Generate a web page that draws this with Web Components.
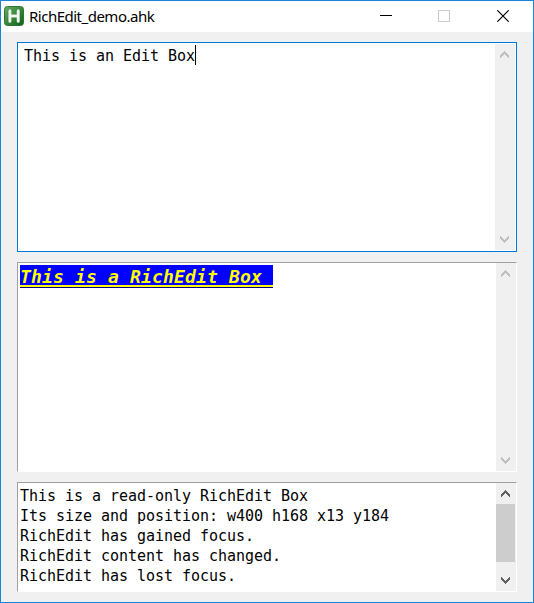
<!DOCTYPE html>
<html lang="en"><head><meta charset="utf-8"><title>RichEdit_demo.ahk</title>
<style>html,body{margin:0;height:100%;overflow:hidden}</style></head><body>
<demo-window>
  <title-bar slot="title">RichEdit_demo.ahk</title-bar>
  <text-box focused><edit-text>This is an Edit Box</edit-text></text-box>
  <text-box><rich-text>This is a RichEdit Box </rich-text></text-box>
  <text-box short active><log-text>This is a read-only RichEdit Box
Its size and position: w400 h168 x13 y184
RichEdit has gained focus.
RichEdit content has changed.
RichEdit has lost focus.</log-text></text-box>
</demo-window>
<script>
const define = (name, html) => customElements.define(name, class extends HTMLElement {
  constructor() { super(); this.attachShadow({mode: 'open'}).innerHTML = html; }
});

define('demo-window', `<style>
:host{display:flex;flex-direction:column;box-sizing:border-box;width:534px;height:603px;border:1px solid #1883d7;background:#f0f0f0}
main{display:flex;flex-direction:column;gap:10px;padding:10px 16px}
</style><slot name="title"></slot><main><slot></slot></main>`);

define('title-bar', `<style>
:host{display:flex;height:31px;background:#fff;color:#000;font:15px/31px "Noto Sans","Open Sans",sans-serif}
.logo{margin:5px 5px 0 3px;flex:none}
.name{flex:1;letter-spacing:-.5px;white-space:nowrap}
.buttons{display:flex;margin-right:1px}
.buttons svg{display:block;width:12px;height:12px;margin:9px 23px 0}
.buttons svg.max{margin-left:22px}
.buttons svg.min{margin-right:24px}
.buttons svg.max{margin-right:24px}
</style>
<svg class="logo" width="20" height="20" viewBox="0 0 20 20">
<defs><linearGradient id="g" x1="0" y1="0" x2="1" y2="1"><stop offset="0" stop-color="#67ad69"/><stop offset=".45" stop-color="#3d8d40"/><stop offset="1" stop-color="#0d5f14"/></linearGradient></defs>
<rect x=".5" y=".5" width="19" height="19" rx="3" fill="url(#g)" stroke="#2e7534"/>
<path d="M5.9 5V15.2M14.2 5V15.2M6 10H14" stroke="#174f1b" stroke-width="4.2" stroke-linecap="round" opacity=".3"/>
<path d="M5.9 4.8V15.2M14.2 4.8V15.2M6 10H14" stroke="#f0f5f0" stroke-width="3" stroke-linecap="round"/></svg>
<span class="name"><slot></slot></span>
<div class="buttons">
<svg class="min" viewBox="0 0 12 12"><path d="M0 5.5H12" stroke="#000"/></svg>
<svg class="max" viewBox="0 0 12 12"><rect x=".5" y=".5" width="11" height="11" fill="none" stroke="#ccc"/></svg>
<svg viewBox="0 0 12 12"><path d="M.3.3 11.7 11.7M11.7.3.3 11.7" stroke="#000" stroke-width="1.2"/></svg>
</div>`);

define('text-box', `<style>
:host{display:flex;box-sizing:border-box;width:500px;height:210px;background:#fff;border:1px solid #a0a0a0;border-right-color:#fff;border-bottom-color:#fff}
:host([short]){height:110px}
:host([focused]){border-color:#0078d7;padding:1px}
.content{flex:1;min-width:0}
</style><div class="content"><slot></slot></div><scroll-bar></scroll-bar>`);

customElements.define('scroll-bar', class extends HTMLElement {
  connectedCallback() {
    const host = this.getRootNode().host;
    const active = host.hasAttribute('active');
    this.attachShadow({mode: 'open'}).innerHTML = `<style>
:host{display:flex;flex-direction:column;width:20px;background:#f0f0f0;color:${active ? '#606060' : '#bfbfbf'}}
svg{display:block;width:9px;height:7px;margin:7px 0 7px 5px;fill:currentColor;flex:none}
.track{flex:1}
.thumb{width:19px;height:58px;background:#cdcdcd}
</style>
<svg viewBox="0 0 9 7" shape-rendering="crispEdges"><path d="M0 4H1V3H2V2H3V1H4V0H5V1H6V2H7V3H8V4H9V7H8V6H7V5H6V4H5V3H4V4H3V5H2V6H1V7H0Z"/></svg>
<div class="track">${active ? '<div class="thumb"></div>' : ''}</div>
<svg viewBox="0 0 9 7" shape-rendering="crispEdges"><path transform="matrix(1 0 0 -1 0 7)" d="M0 4H1V3H2V2H3V1H4V0H5V1H6V2H7V3H8V4H9V7H8V6H7V5H6V4H5V3H4V4H3V5H2V6H1V7H0Z"/></svg>`;
  }
});

define('edit-text', `<style>
:host{display:flex;padding:2px 0 0 5px;color:#000;font:15px/20px "DejaVu Sans Mono",monospace;letter-spacing:-.03px;white-space:pre}
i{width:1px;height:20px;margin-top:-1px;background:#000}
</style><slot></slot><i></i>`);
define('rich-text', `<style>
:host{display:block;padding:2px 0 0 2px}
span{display:block;box-sizing:border-box;width:253px;height:23px;background:linear-gradient(#00f 20px,#ff0 20px 22px,#000080 22px);color:#ff0;font:italic bold 18px/24px "DejaVu Sans Mono",monospace;letter-spacing:.16px;white-space:pre}
</style><span><slot></slot></span>`);
define('log-text', `<style>
:host{display:block;padding:3px 0 0 2px;color:#000;font:15px/20px "DejaVu Sans Mono",monospace;letter-spacing:-.03px;white-space:pre}
</style><slot></slot>`);
</script></body></html>
